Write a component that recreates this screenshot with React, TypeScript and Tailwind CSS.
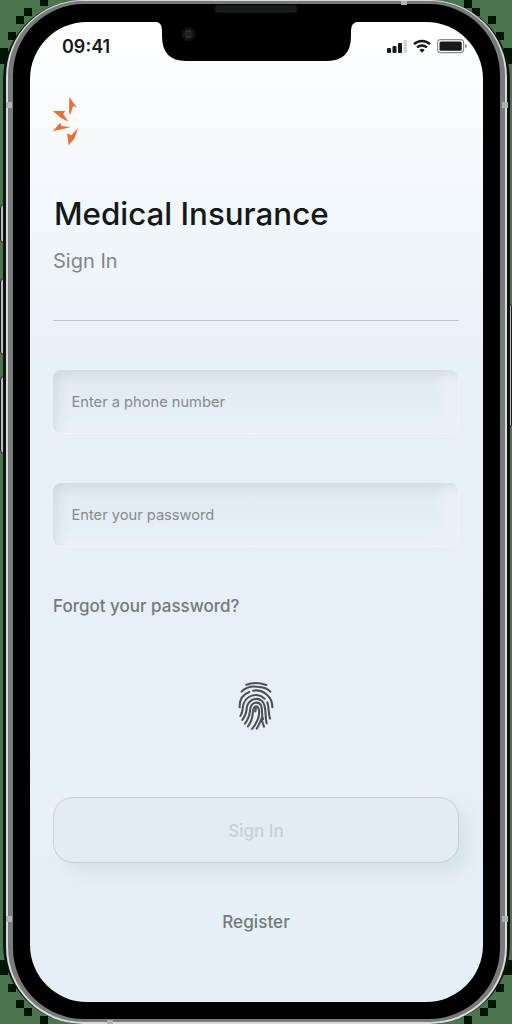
import React from "react";

const Field = ({ label, type }: { label: string; type: string }) => (
  <input
    type={type}
    aria-label={label}
    placeholder={label}
    className="block h-16 w-full rounded-lg border-r border-b border-[#f0f5fa] bg-linear-to-b from-[#dfe9f1] to-[#e9f1f9] pt-px pr-[18px] pl-[18.500px] text-[14.650px] text-[#858a8c] shadow-[inset_6px_6px_8px_-1px_rgba(190,205,213,0.45),inset_-16px_-6px_12px_0px_rgba(234,240,248,0.95)] outline-none placeholder:text-[#858a8c]"
  />
);

const blocks = [
  [40, 0, 8, 6], [24, 8, 8, 8], [16, 16, 8, 8], [8, 32, 8, 8], [0, 48, 8, 16],
  [464, 0, 8, 8], [472, 8, 8, 8], [488, 16, 8, 8], [496, 32, 8, 8], [504, 48, 8, 16],
  [0, 960, 8, 15], [8, 984, 8, 8], [16, 1000, 8, 8], [24, 1008, 8, 8], [40, 1016, 8, 8],
  [504, 960, 8, 15], [496, 984, 8, 8], [488, 1000, 8, 8], [480, 1008, 8, 8], [464, 1016, 8, 8],
];

const Fingerprint = () => (
  <svg className="h-[70px] w-[60px]" viewBox="0 0 180 210" fill="none" stroke="#4a5253" strokeWidth="6.200" strokeLinecap="round">
    <path d="M61 44Q90 34 121 45" />
    <path d="M47 65C62 48 84 49 94 50C113 51 126 56 133 65" />
    <path d="M41 112C40 87 53 72 70 66M81 62C112 56 140 82 139 112" />
    <path d="M43 138C53 124 48 113 53 101C60 82 77 74 93 75C103 76 110 80 116 86" />
    <path d="M124 97C130 112 126 128 132 146" />
    <path d="M49 150C67 126 59 119 64 106C72 87 94 81 108 93C123 106 115 132 122 160" />
    <path d="M57 161C74 139 70 126 74 111C80 95 98 94 105 106C111 119 105 132 111 148" />
    <path d="M66 169C84 145 78 131 83 115C87 106 96 108 98 116C102 132 96 151 86 166L78 177" />
    <path d="M90 114L88 124" />
    <path d="M92 176C100 163 103 156 106 147L114 170" />
  </svg>
);

export default function App() {
  return (
    <main className="relative h-[1024px] w-[512px] overflow-hidden bg-[#4b754f] font-['Inter',sans-serif]">
      <svg className="absolute inset-0" width="512" height="1024" aria-hidden="true">
        {blocks.map(([x, y, w, h], i) => <rect key={i} x={x} y={y} width={w} height={h} fill="#001503" />)}
      </svg>
      <div className="absolute top-[204px] left-0 h-[39px] w-2 rounded-l-sm border border-[#181a19] bg-[#b9bdbb]" />
      <div className="absolute top-[278px] left-0 h-[77px] w-2 rounded-l-sm border border-[#181a19] bg-[#b9bdbb]" />
      <div className="absolute top-[376px] left-0 h-[78px] w-2 rounded-l-sm border border-[#181a19] bg-[#b9bdbb]" />
      <div className="absolute top-[303px] right-0 h-[125px] w-2 rounded-r-sm border border-[#181a19] bg-[#b9bdbb]" />

      <div className="relative ml-[3px] h-[1024px] w-[507px] rounded-[80px] bg-[#111312] px-[3px]">
        <div className="h-full rounded-[77px] bg-[#d9dbda] px-[2px] pt-px pb-[2px]">
          <div className="h-full rounded-[75px] bg-[#777b79] px-[5px] pt-[3px] pb-[3px]">
            <div className="h-full rounded-[71px] bg-black px-[17px] pt-[18px] pb-[17px]">
              <section className="flex h-[980px] w-[453px] flex-col overflow-hidden rounded-[57px] bg-linear-to-b from-white via-[#e8f0f8] via-35% to-[#e5eff7] pr-6 pl-[23px]">
                <header className="flex h-12 shrink-0 justify-between">
                  <span className="w-[66px] pt-[12px] pl-[9px] text-[18px] leading-[26px] font-semibold text-[#17191b]">09:41</span>
                  <div className="-mr-2 flex w-[80px] gap-[6px] pt-4">
                    <svg className="h-4 w-5 shrink-0" viewBox="0 0 20 16">
                      <rect x="0" y="10" width="4" height="5" rx="1" fill="#17191b" />
                      <rect x="5.500" y="8" width="4" height="7" rx="1" fill="#17191b" />
                      <rect x="11" y="5" width="4" height="10" rx="1" fill="#17191b" />
                      <rect x="16.500" y="2" width="3.500" height="13" rx="1" fill="#d3d5d6" />
                    </svg>
                    <svg className="h-4 w-[18px] shrink-0" viewBox="0 0 18 16" fill="none" stroke="#17191b" strokeWidth="2.400">
                      <path d="M1 6.200a11.500 11.500 0 0 1 16 0M4 9.500a7.200 7.200 0 0 1 10 0" />
                      <path d="M9 14.700 6.400 12a3.800 3.800 0 0 1 5.200 0Z" fill="#17191b" stroke="none" />
                    </svg>
                    <svg className="h-4 w-[31px] shrink-0" viewBox="0 0 31 16">
                      <rect x=".6" y="1.600" width="26" height="13" rx="3" fill="none" stroke="#8a8d8e" strokeWidth="1.100" />
                      <rect x="2.500" y="3.500" width="22.200" height="9.200" rx="1.500" fill="#17191b" />
                      <path d="M28 6v4q2-.5 2-2t-2-2Z" fill="#8a8d8e" />
                    </svg>
                  </div>
                </header>

                <svg className="mt-[15px] -ml-[13px] h-[70px] w-[60px] shrink-0" viewBox="0 0 180 210" fill="#e96f36">
                  <path d="M88 36 110 67 99 64 91 89 87 82Z" />
                  <path d="M39 78 76 78 70 87 85 110 62 98Z" />
                  <path d="M38 139 61 113 64 123 93 126 66 133Z" />
                  <path d="M114 130 104 160 86 181 81 145 94 151Z" />
                </svg>

                <h1 className="mt-[41px] h-9 pl-px text-[31.300px] leading-9 font-medium whitespace-nowrap text-[#141819]">Medical Insurance</h1>
                <h2 className="mt-[17px] h-6 text-[20px] leading-6 text-[#818786]">Sign In</h2>
                <hr className="mt-[47px] border-[#bfc8cf]" />
                <form className="mt-[49px] flex flex-col" onSubmit={(e) => e.preventDefault()}>
                  <Field label="Enter a phone number" type="tel" />
                  <div className="mt-[49px]"><Field label="Enter your password" type="password" /></div>
                  <a className="mt-[47px] h-6 w-fit text-[17px] leading-6 font-medium text-[#737a79]">Forgot your password?</a>
                  <div className="mt-[52px] flex h-[70px] justify-center"><Fingerprint /></div>
                  <button className="mt-[57px] h-[66px] w-full rounded-[20px] border border-[#c5cfd4] bg-[#e2ecf4] pt-[3px] text-[17px] font-medium text-[#c8d0d3] shadow-[10px_10px_20px_#d6e2ea,-12px_-12px_18px_#eaf1f9]">Sign In</button>
                </form>
                <a className="mt-[47px] self-center text-[17.200px] leading-6 font-medium text-[#737a79]">Register</a>
              </section>
            </div>
          </div>
        </div>
      </div>

      <svg className="absolute inset-0" width="512" height="1024" aria-hidden="true">
        <path d="M154 21.500Q162 21.500 162 30V36Q162 61 186 61H327Q351 61 351 36V30Q351 22 359 21.500Z" fill="#000" />
        <rect x="215" y="5" width="82" height="8" rx="3" fill="#171a19" />
        <circle cx="188.500" cy="34" r="7" fill="#101211" />
        <circle cx="188.500" cy="34" r="4" fill="#1d201f" />
        <path d="M186 31h5M186 37h5" stroke="#3c403e" />
        <path d="M6 105h6M502 105h6M6 919h6M502 919h6M404 1v4M110 1020v4" stroke="#aeb4b1" strokeWidth="6" />
      </svg>
    </main>
  );
}
